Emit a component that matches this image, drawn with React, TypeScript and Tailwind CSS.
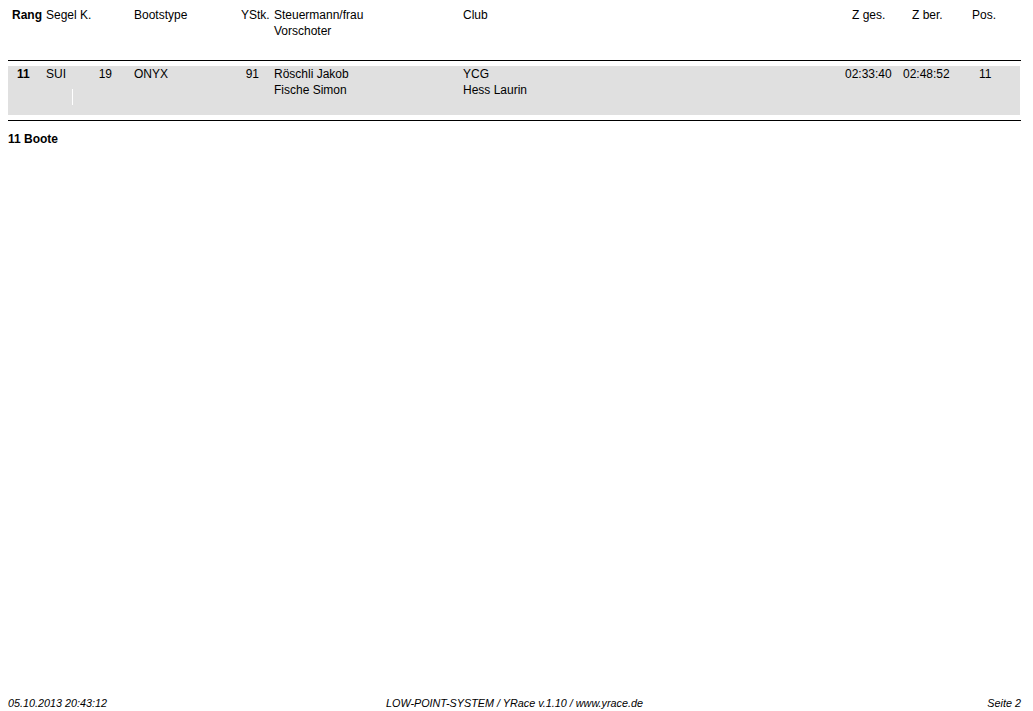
export default function App() {
  return (
    <div
      className="w-[1033px] h-[711px] bg-white text-black flex flex-col text-[12px] leading-[16px] overflow-hidden"
      style={{ fontFamily: '"Liberation Sans", Arial, sans-serif' }}
    >
      {/* Header */}
      <div className="h-[60px] pt-[7px] pl-[8px] flex whitespace-nowrap">
        <div className="w-[38px] pl-[4px] font-bold">Rang</div>
        <div className="w-[88px]">Segel K.</div>
        <div className="w-[107px]">Bootstype</div>
        <div className="w-[33px]">YStk.</div>
        <div className="w-[189px] flex flex-col">
          <span>Steuermann/frau</span>
          <span>Vorschoter</span>
        </div>
        <div className="w-[389px]">Club</div>
        <div className="w-[60px]">Z ges.</div>
        <div className="w-[60px]">Z ber.</div>
        <div>Pos.</div>
      </div>

      <div className="ml-[8px] w-[1013px] h-px bg-black" />

      {/* Data row */}
      <div className="mt-[5px] ml-[8px] w-[1012px] h-[49px] bg-[#e0e0e0] flex whitespace-nowrap">
        <div className="w-[38px] pl-[9px] font-bold">11</div>
        <div className="w-[26px]">SUI</div>
        <div className="w-[40px] flex flex-col">
          <span className="text-right">19</span>
          <div className="mt-[7px] h-[16px] w-px bg-white" />
        </div>
        <div className="w-[122px] pl-[22px]">ONYX</div>
        <div className="w-[25px] text-right">91</div>
        <div className="w-[204px] pl-[15px] flex flex-col">
          <span>Röschli Jakob</span>
          <span>Fische Simon</span>
        </div>
        <div className="w-[382px] flex flex-col">
          <span>YCG</span>
          <span>Hess Laurin</span>
        </div>
        <div className="w-[58px]">02:33:40</div>
        <div className="w-[75px]">02:48:52</div>
        <div className="pl-[1px]">11</div>
      </div>

      <div className="mt-[5px] ml-[8px] w-[1013px] h-px bg-black" />

      <div className="mt-[10px] ml-[8px]">
        <span className="font-bold">11 Boote</span>
      </div>

      {/* Footer */}
      <div className="mt-auto ml-[8px] w-[1013px] grid grid-cols-3 italic text-[10.8px] leading-[16px] whitespace-nowrap">
        <div>05.10.2013 20:43:12</div>
        <div className="text-center">LOW-POINT-SYSTEM / YRace v.1.10 / www.yrace.de</div>
        <div className="text-right">Seite 2</div>
      </div>
    </div>
  );
}
